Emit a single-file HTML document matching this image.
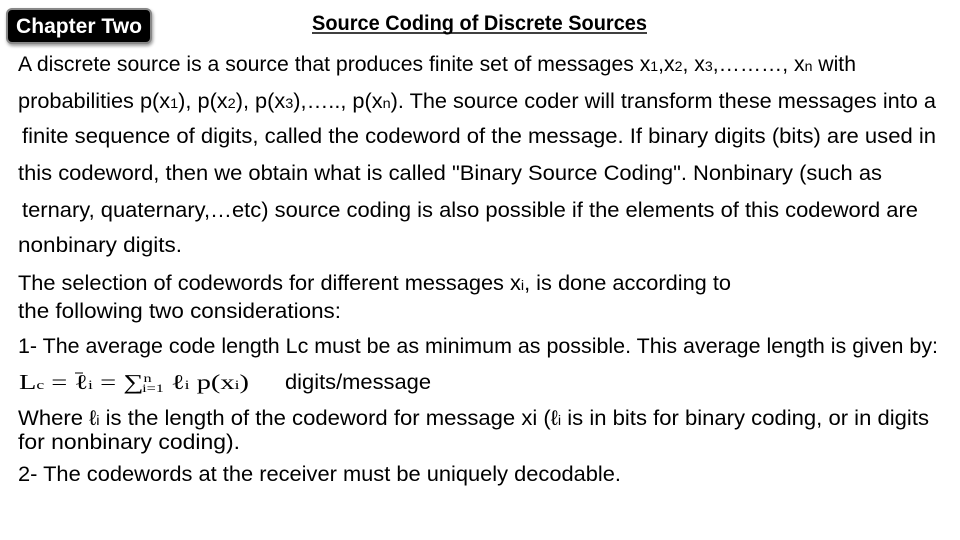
<!DOCTYPE html>
<html><head><style>
body{margin:0;width:960px;height:540px;background:#fff;overflow:hidden;position:relative}
.box{position:absolute;left:6px;top:8px;width:142px;height:32px;background:#000;border:2px solid #888;border-radius:6px;box-shadow:1px 2px 3px rgba(0,0,0,.4)}
svg{position:absolute;left:0;top:0}
text{font-family:"Liberation Sans",sans-serif;font-size:21px;fill:#000}
.m{font-family:"Liberation Serif",serif}
</style></head><body>
<div class="box"></div>
<svg width="960" height="540">
<text x="16" y="33" style="fill:#fff;font-weight:bold" textLength="126" lengthAdjust="spacingAndGlyphs">Chapter Two</text>
<text x="312" y="30" style="font-weight:bold" textLength="335" lengthAdjust="spacingAndGlyphs">Source Coding of Discrete Sources</text>
<line x1="312" y1="33" x2="647" y2="33" stroke="#000" stroke-width="1.5"/>
<text x="18" y="71" textLength="838" lengthAdjust="spacingAndGlyphs">A discrete source is a source that produces finite set of messages x<tspan font-size="14">1</tspan>,x<tspan font-size="14">2</tspan>, x<tspan font-size="14">3</tspan>,………, x<tspan font-size="14">n</tspan> with</text>
<text x="18" y="108" textLength="918" lengthAdjust="spacingAndGlyphs">probabilities p(x<tspan font-size="14">1</tspan>), p(x<tspan font-size="14">2</tspan>), p(x<tspan font-size="14">3</tspan>),….., p(x<tspan font-size="14">n</tspan>). The source  coder will transform these messages into a</text>
<text x="22" y="143" textLength="914" lengthAdjust="spacingAndGlyphs">finite sequence of digits, called  the codeword of the message. If binary digits (bits) are used in</text>
<text x="18" y="180" textLength="864" lengthAdjust="spacingAndGlyphs">this  codeword, then we obtain what is called "Binary Source Coding". Nonbinary (such as</text>
<text x="22" y="217" textLength="896" lengthAdjust="spacingAndGlyphs">ternary, quaternary,…etc) source coding is also  possible if the elements of this codeword are</text>
<text x="18" y="252" textLength="164" lengthAdjust="spacingAndGlyphs">nonbinary digits.</text>
<text x="18" y="290" textLength="713" lengthAdjust="spacingAndGlyphs">The selection of codewords for different messages x<tspan font-size="14">i</tspan>, is done according to</text>
<text x="18" y="318" textLength="323" lengthAdjust="spacingAndGlyphs">the following two considerations:</text>
<text x="18" y="353" textLength="920" lengthAdjust="spacingAndGlyphs">1- The average code length Lc must be as minimum as possible. This  average length is given by:</text>
<text class="m" x="19" y="389" textLength="230" lengthAdjust="spacingAndGlyphs">L<tspan font-size="13">c</tspan> = ℓ<tspan font-size="13">i</tspan> = ∑<tspan font-size="12" dy="-7">n</tspan><tspan font-size="12" dy="10" dx="-7">i=1</tspan><tspan dy="-3">  ℓ</tspan><tspan font-size="13">i</tspan> p(x<tspan font-size="13">i</tspan>)</text>
<line x1="75" y1="373" x2="83" y2="373" stroke="#000" stroke-width="1"/>
<text x="285" y="389" textLength="146" lengthAdjust="spacingAndGlyphs">digits/message</text>
<text x="18" y="425" textLength="911" lengthAdjust="spacingAndGlyphs">Where ℓ<tspan font-size="14">i</tspan> is the length of the codeword for message xi (ℓ<tspan font-size="14">i</tspan> is in bits for binary  coding, or in digits</text>
<text x="18" y="449" textLength="222" lengthAdjust="spacingAndGlyphs">for nonbinary coding).</text>
<text x="18" y="481" textLength="603" lengthAdjust="spacingAndGlyphs">2- The codewords at the receiver must be uniquely decodable.</text>
</svg>
</body></html>
